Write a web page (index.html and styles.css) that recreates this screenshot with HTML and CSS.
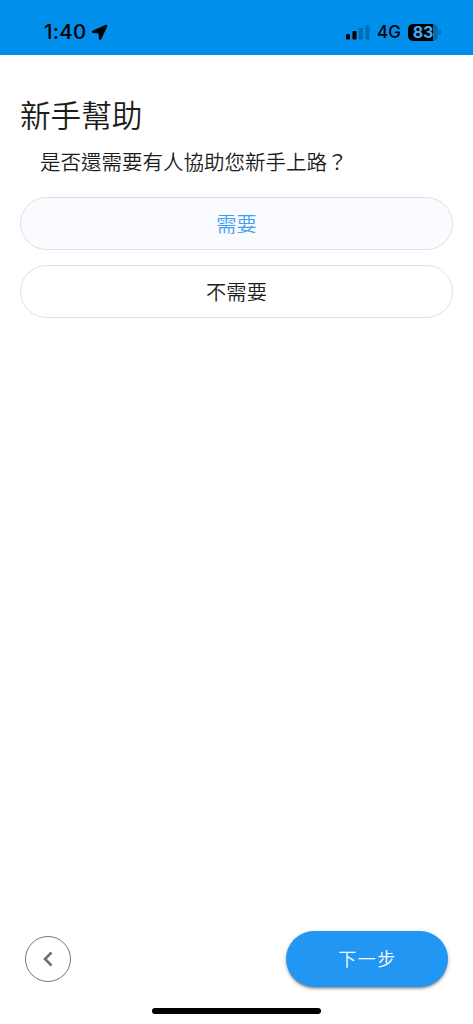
FILE: index.html
```
<!DOCTYPE html>
<html lang="zh-Hant">
<head>
<meta charset="utf-8">
<meta name="viewport" content="width=device-width, initial-scale=1">
<title>新手幫助</title>
<link rel="stylesheet" href="styles.css">
</head>
<body>
<div class="screen">
  <header class="status">
    <div class="status-left">
      <span class="time">1:40</span>
      <svg class="location" width="17" height="17" viewBox="0 0 17 17"><path d="M15 1.200 1.500 7.200Q.8 8 1.600 8.400L7.900 9 8.500 15.300Q8.900 16.200 9.700 15.400L15.900 2Q16 1 15 1.200Z"/></svg>
    </div>
    <div class="status-right">
      <svg class="signal" width="24" height="16" viewBox="0 0 24 16"><rect x="0" y="10" width="4" height="5.500" rx="1"/><rect x="6.500" y="7" width="4" height="8.500" rx="1"/><g opacity=".25"><rect x="13" y="4" width="4" height="11.500" rx="1"/><rect x="19.500" y="1" width="4" height="14.500" rx="1"/></g></svg>
      <span class="network">4G</span>
      <div class="battery"><span class="level">83</span></div>
      <span class="battery-tip"></span>
    </div>
  </header>
  <main class="content">
    <h1 class="title">新手幫助</h1>
    <p class="question">是否還需要有人協助您新手上路？</p>
    <div class="options">
      <button class="option selected">需要</button>
      <button class="option">不需要</button>
    </div>
  </main>
  <footer class="actions">
    <button class="back" aria-label="返回"><svg width="26" height="26" viewBox="0 0 26 26"><path d="m16.500 6.500-6.500 6.500 6.500 6.500"/></svg></button>
    <button class="next">下一步</button>
  </footer>
  <div class="home-indicator"></div>
</div>
</body>
</html>
```
FILE: styles.css
```
* { box-sizing: border-box; }
body {
  margin: 0;
  background: #fff;
  color: #1c1c1c;
  font-family: "Noto Sans CJK TC", sans-serif;
}
button { font: inherit; color: inherit; padding: 0; }
svg { display: block; }
.screen { height: 1024px; display: flex; flex-direction: column; }
.status {
  height: 55px;
  padding: 9px 32px 0 44px;
  display: flex;
  justify-content: space-between;
  align-items: center;
  background: #0090ec;
  color: #000;
  font-family: Inter, sans-serif;
}
.status-left, .status-right { display: flex; align-items: center; }
.time { font-size: 20.500px; font-weight: 500; letter-spacing: 0.3px; line-height: 24px; }
.location { margin-left: 4px; }
.location path { stroke: #000; stroke-width: 1; stroke-linejoin: round; }
.signal { margin-right: 7px; }
.network { font-size: 17px; font-weight: 450; line-height: 20px; width: 24px; margin-right: 7px; }
.battery {
  width: 30px;
  height: 17px;
  border-radius: 5px;
  background: linear-gradient(90deg, #000 25px, #046cb1 25px);
  display: flex;
  align-items: center;
  justify-content: center;
}
.level { color: #42aef5; font-size: 16px; font-weight: 700; line-height: 17px; }
.battery-tip { width: 2px; height: 6px; margin-left: 1px; border-radius: 0 3px 3px 0; background: #046cb1; }
.content { flex: 1; padding: 37px 20px 0; }
.title { margin: 0; font-size: 30.600px; font-weight: 350; line-height: 44px; }
.question { margin: 9px 0 0 20px; font-size: 20.500px; font-weight: 350; line-height: 32px; white-space: nowrap; }
.options { margin-top: 20px; display: flex; flex-direction: column; gap: 15px; }
.option {
  height: 53px;
  padding-bottom: 1px;
  border: 1.500px solid #e0e0e2;
  border-radius: 27px;
  background: #fff;
  font-size: 20.300px;
  font-weight: 350;
}
.option.selected { background: #fafbff; color: #42a0f0; }
.actions { padding: 0 25px 21.500px; display: flex; justify-content: space-between; align-items: center; }
.back {
  width: 46px;
  height: 46px;
  border: 1.500px solid #757575;
  border-radius: 50%;
  background: #fff;
  display: flex;
  align-items: center;
  justify-content: center;
}
.back path { fill: none; stroke: #707070; stroke-width: 2.600; }
.next {
  width: 162px;
  height: 56px;
  padding: 0 0 1px 1px;
  border: 0;
  border-radius: 28px;
  background: #2196f3;
  color: #fff;
  font-size: 18px;
  font-weight: 350;
  letter-spacing: 1.500px;
  box-shadow: 0 3px 2px -2px rgba(0,0,0,.25), 0 2px 3px rgba(0,0,0,.2), 0 1px 5px rgba(0,0,0,.15);
}
.home-indicator { width: 169px; height: 6px; margin: 0 auto 10px; border-radius: 3px; background: #000; }
```
